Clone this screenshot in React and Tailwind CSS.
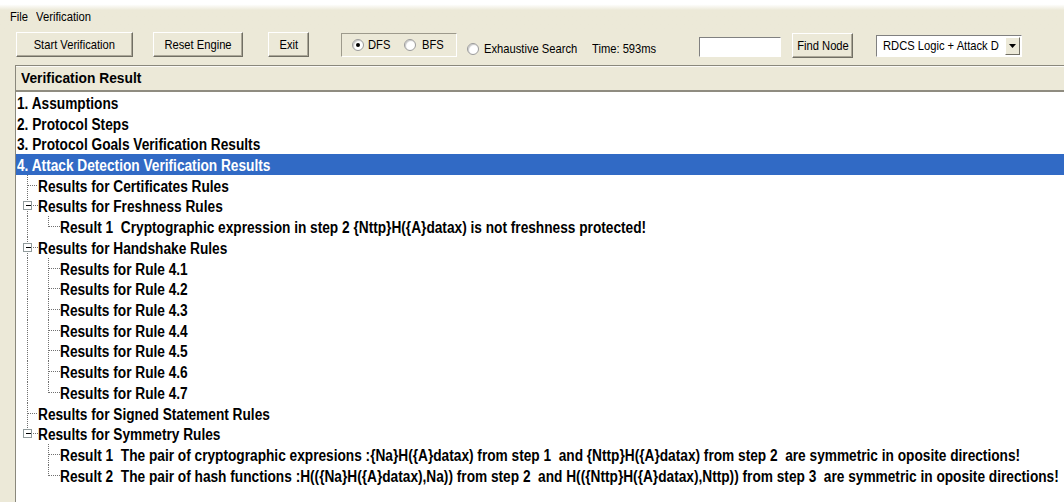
import React from "react";

const rows = [
  { lvl: 0, text: "1. Assumptions" },
  { lvl: 0, text: "2. Protocol Steps" },
  { lvl: 0, text: "3. Protocol Goals Verification Results" },
  { lvl: 0, text: "4. Attack Detection Verification Results", sel: true },
  { lvl: 1, text: "Results for Certificates Rules" },
  { lvl: 1, text: "Results for Freshness Rules", box: true },
  { lvl: 2, text: "Result 1  Cryptographic expression in step 2 {Nttp}H({A}datax) is not freshness protected!", last: true },
  { lvl: 1, text: "Results for Handshake Rules", box: true },
  { lvl: 2, text: "Results for Rule 4.1" },
  { lvl: 2, text: "Results for Rule 4.2" },
  { lvl: 2, text: "Results for Rule 4.3" },
  { lvl: 2, text: "Results for Rule 4.4" },
  { lvl: 2, text: "Results for Rule 4.5" },
  { lvl: 2, text: "Results for Rule 4.6" },
  { lvl: 2, text: "Results for Rule 4.7", last: true },
  { lvl: 1, text: "Results for Signed Statement Rules" },
  { lvl: 1, text: "Results for Symmetry Rules", box: true, last: true },
  { lvl: 2, parentLast: true, text: "Result 1  The pair of cryptographic expresions :{Na}H({A}datax) from step 1  and {Nttp}H({A}datax) from step 2  are symmetric in oposite directions!" },
  { lvl: 2, parentLast: true, last: true, text: "Result 2  The pair of hash functions :H(({Na}H({A}datax),Na)) from step 2  and H(({Nttp}H({A}datax),Nttp)) from step 3  are symmetric in oposite directions!" },
];

// One column of tree connector lines: vertical guide, elbow and optional expand box.
function Guide({ cx, elbow, last, box }) {
  const mid = 10.5;
  return (
    <svg width="22" height="21" className="block shrink-0">
      {(elbow || !last) && (
        <line x1={cx} y1="0" x2={cx} y2={last ? mid : 21} stroke="#707070" strokeDasharray="1 1" shapeRendering="crispEdges" />
      )}
      {elbow && !box && (
        <line x1={cx} y1={mid} x2="22" y2={mid} stroke="#707070" strokeDasharray="1 1" shapeRendering="crispEdges" />
      )}
      {box && (
        <g shapeRendering="crispEdges">
          <line x1={cx + 5} y1={mid} x2="22" y2={mid} stroke="#707070" strokeDasharray="1 1" />
          <rect x={cx - 4} y={mid - 4} width="8" height="8" fill="#fff" stroke="#919b9c" />
          <line x1={cx - 2} y1={mid} x2={cx + 3} y2={mid} stroke="#000" />
        </g>
      )}
    </svg>
  );
}

function Btn({ children, className = "" }) {
  return (
    <div
      className={`flex h-[25px] items-center justify-center border border-t-white border-l-white border-r-[#716f64] border-b-[#716f64] bg-[#ece9d8] text-[13px] text-black shadow-[inset_-1px_-1px_0_#aca899] ${className}`}
    >
      <span className="inline-block origin-center scale-x-[0.86] whitespace-pre">{children}</span>
    </div>
  );
}

function Radio({ on }) {
  return (
    <span className="flex h-[12px] w-[12px] shrink-0 items-center justify-center rounded-full border border-[#9a9a9a] bg-white shadow-[inset_1px_1px_1px_#c8c8c8]">
      {on && <span className="h-[4px] w-[4px] rounded-full bg-black" />}
    </span>
  );
}

// Fixed-width slot holding a horizontally condensed label.
function Label({ children, className = "" }) {
  return (
    <span className={`block shrink-0 overflow-visible whitespace-pre ${className}`}>
      <span className="inline-block origin-left scale-x-[0.86]">{children}</span>
    </span>
  );
}

export default function App() {
  return (
    <div className="flex h-[502px] w-[1064px] flex-col overflow-hidden bg-[#ece9d8] font-['Liberation_Sans',Arial,sans-serif] text-black">
      {/* menu bar */}
      <div className="flex h-[29px] shrink-0 items-center bg-gradient-to-b from-white from-[15%] to-[#ece9d8] to-[35%] pl-[10px] pt-[5px] text-[12.5px]">
        <span className="block w-[26px]"><span className="inline-block origin-left scale-x-[0.9]">File</span></span>
        <span className="block"><span className="inline-block origin-left scale-x-[0.9]">Verification</span></span>
      </div>

      {/* toolbar */}
      <div className="flex h-[36px] shrink-0 items-start text-[13px]">
        <Btn className="ml-[16px] mt-[3px] w-[117px]">Start Verification</Btn>
        <Btn className="ml-[20px] mt-[3px] w-[90px]">Reset Engine</Btn>
        <Btn className="ml-[25px] mt-[3px] w-[41px]">Exit</Btn>
        <div className="ml-[32px] mt-[4px] flex h-[24px] w-[116px] items-center border border-t-[#9d9a8c] border-l-[#9d9a8c] border-r-white border-b-white pl-[10px]">
          <Radio on />
          <Label className="ml-[4px] w-[24px]">DFS</Label>
          <span className="ml-[12px]"><Radio /></span>
          <Label className="ml-[6px] w-[21px]">BFS</Label>
        </div>
        <div className="ml-[10px] mt-[10px] flex items-center">
          <Radio />
          <Label className="ml-[5px] w-[93px]">Exhaustive Search</Label>
          <Label className="ml-[15px] w-[64px]">Time: 593ms</Label>
        </div>
        <div className="ml-[43px] mt-[8px] h-[20px] w-[82px] shrink-0 border border-t-[#808080] border-l-[#808080] border-r-white border-b-white bg-white" />
        <Btn className="ml-[11px] mt-[4px] h-[24px] w-[61px] shrink-0">Find Node</Btn>
        <div className="ml-[23px] mt-[6px] flex h-[22px] w-[146px] shrink-0 items-center border border-t-[#808080] border-l-[#808080] border-r-white border-b-white bg-white">
          <span className="mr-[6px] min-w-0 flex-1 overflow-hidden whitespace-nowrap pl-[6px] text-[13px]">
            <span className="inline-block origin-left scale-x-[0.86]">RDCS Logic + Attack Detection</span>
          </span>
          <span className="mr-[1px] flex h-[18px] w-[15px] shrink-0 items-center justify-center border border-t-white border-l-white border-r-[#716f64] border-b-[#716f64] bg-[#ece9d8]">
            <svg width="7" height="4" viewBox="0 0 7 4"><path d="M0 0h7L3.5 4z" fill="#000" /></svg>
          </span>
        </div>
      </div>

      {/* result tree panel */}
      <div className="ml-[15px] flex min-h-0 flex-1 flex-col border-l border-t border-l-[#8a887c] border-t-[#8a887c] bg-white">
        <div className="flex h-[26px] shrink-0 items-center border-b-2 border-b-[#8f8c80] bg-[#ece9d8] pl-[5px] text-[15.5px] font-bold shadow-[inset_0_1px_0_#fbfaf6]">
          <span className="inline-block origin-left scale-x-[0.89]">Verification Result</span>
        </div>
        <div className="flex flex-col text-[16px] font-bold">
          {rows.map((r, i) => (
            <div
              key={i}
              className={`flex h-[20.72px] items-center whitespace-pre ${r.sel ? "bg-[#316ac5] text-white" : ""} ${r.lvl === 0 ? "pl-[1px]" : ""}`}
            >
              {r.lvl === 1 && <Guide cx={11.5} elbow last={r.last} box={r.box} />}
              {r.lvl === 2 && (
                <>
                  <Guide cx={11.5} last={r.parentLast} />
                  <Guide cx={10.5} elbow last={r.last} />
                </>
              )}
              <span className="inline-block shrink-0 origin-left scale-x-[0.855] pt-[3px]">{r.text}</span>
            </div>
          ))}
        </div>
      </div>
    </div>
  );
}
